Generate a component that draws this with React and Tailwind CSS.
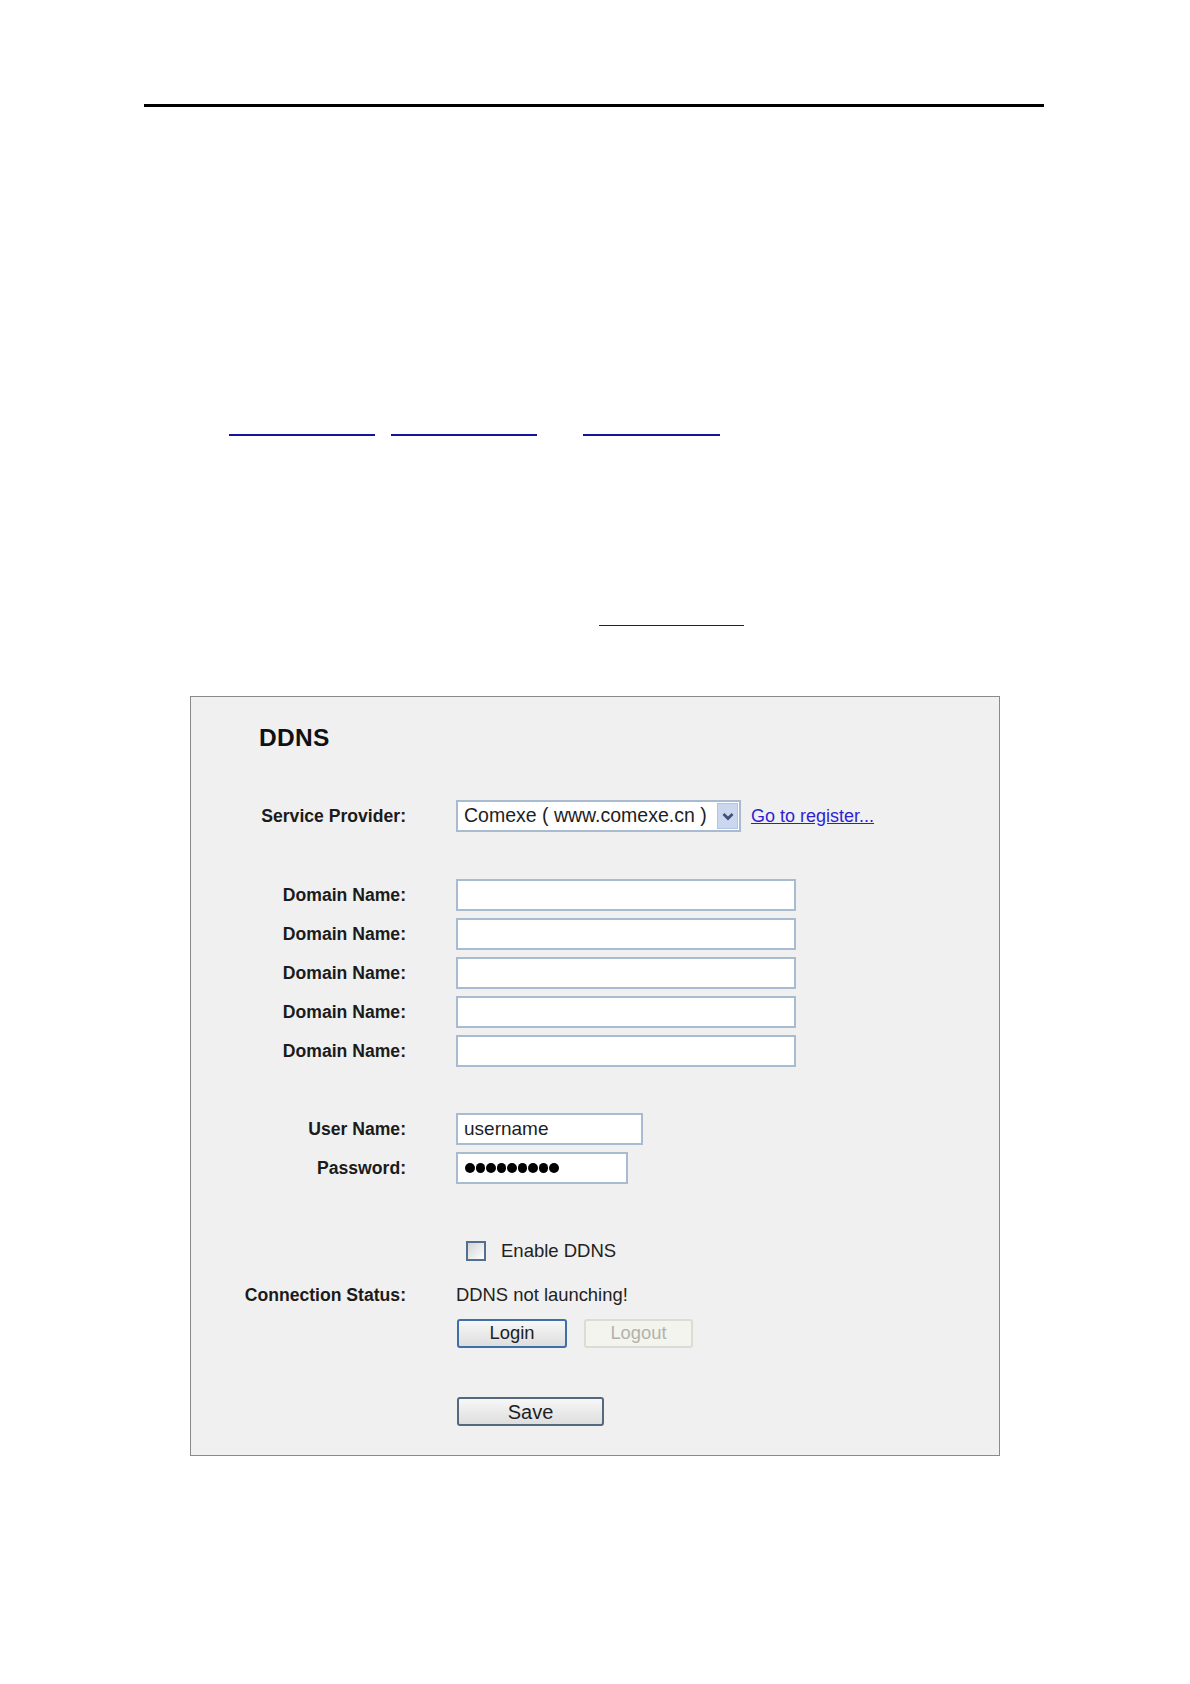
import React from 'react';

const font = { fontFamily: '"Liberation Sans", Arial, sans-serif' };

const Label = ({ children }) => (
  <div className="w-[215px] shrink-0 text-right text-[17.6px] font-bold text-[#1b1b1b]">{children}</div>
);

const Row = ({ label, className = '', children }) => (
  <div className={`flex items-center ${className}`}>
    <Label>{label}</Label>
    <div className="ml-[50px] flex items-center">{children}</div>
  </div>
);

const TextBox = ({ width, children }) => (
  <div
    className={`${width} h-[32px] border-2 border-[#a9bbd0] bg-white pl-[6px] flex items-center text-[19px] text-[#1e1e1e]`}
  >
    {children}
  </div>
);

const App = () => {
  const domains = [1, 2, 3, 4, 5];

  return (
    <div className="w-[1190px] min-h-[1684px] bg-white pt-[104px]" style={font}>
      {/* page rule */}
      <div className="ml-[144px] w-[900px] h-[3px] bg-black" />

      {/* blank link underlines */}
      <div className="mt-[327px] flex pl-[229px]">
        <div className="w-[146px] h-[2px] bg-[#14149b]" />
        <div className="ml-[16px] w-[146px] h-[2px] bg-[#14149b]" />
        <div className="ml-[46px] w-[137px] h-[2px] bg-[#14149b]" />
      </div>
      <div className="mt-[189px] ml-[599px] w-[145px] h-px bg-[#14149b]" />

      {/* DDNS settings panel */}
      <div className="mt-[70px] ml-[190px] w-[810px] border border-[#8a8a8a] bg-[#f0f0f0] pt-[26px] pb-[29px]">
        <div className="pl-[68px] h-[30px] leading-[30px] text-[24.5px] font-bold text-[#111] tracking-[0.3px]">DDNS</div>

        <Row label="Service Provider:" className="mt-[47px] h-[32px]">
          <div className="w-[285px] h-[32px] border-2 border-[#a9bbd0] bg-white flex items-center justify-between pl-[6px] pr-[1px]">
            <span className="text-[19.5px] text-[#1e1e1e] whitespace-nowrap">Comexe ( www.comexe.cn )</span>
            <div className="w-[21px] h-[26px] bg-[#cad7ef] border border-[#b3c5e6] flex items-center justify-center">
              <svg width="12" height="9" viewBox="0 0 12 9">
                <path d="M1.5 2 L6 6.5 L10.5 2" fill="none" stroke="#3f5275" strokeWidth="2.8" />
              </svg>
            </div>
          </div>
          <a href="#" className="ml-[10px] text-[18px] text-[#2f1fd3] underline whitespace-nowrap">
            Go to register...
          </a>
        </Row>

        <div className="mt-[47px] flex flex-col gap-[7px]">
          {domains.map((d) => (
            <Row key={d} label="Domain Name:" className="h-[32px]">
              <TextBox width="w-[340px]" />
            </Row>
          ))}
        </div>

        <Row label="User Name:" className="mt-[46px] h-[32px]">
          <TextBox width="w-[187px]">username</TextBox>
        </Row>
        <Row label="Password:" className="mt-[7px] h-[32px]">
          <TextBox width="w-[172px]">
            <div className="flex gap-[1px] pl-[1px]">
              {[0, 1, 2, 3, 4, 5, 6, 7, 8].map((i) => (
                <div key={i} className="w-[9.5px] h-[9.5px] rounded-full bg-black" />
              ))}
            </div>
          </TextBox>
        </Row>

        <Row label="" className="mt-[57px] h-[20px]">
          <div className="ml-[10px] w-[20px] h-[20px] border-2 border-[#52708f] bg-gradient-to-br from-[#d4d4d4] to-white" />
          <span className="ml-[15px] text-[18.5px] text-[#222]">Enable DDNS</span>
        </Row>

        <Row label="Connection Status:" className="mt-[22px] h-[24px]">
          <span className="text-[18.4px] text-[#222] whitespace-nowrap">DDNS not launching!</span>
        </Row>

        <Row label="" className="mt-[12px] h-[29px]">
          <button className="ml-px w-[110px] h-[29px] rounded-[3px] border-2 border-[#3e6fa6] bg-gradient-to-b from-[#f7f7f7] to-[#dedede] text-[18.4px] text-[#1e1e1e] leading-none">
            Login
          </button>
          <button className="ml-[17px] w-[109px] h-[29px] rounded-[3px] border-2 border-[#dcdcd4] bg-[#f4f4ef] text-[18.4px] text-[#b2b2aa] leading-none">
            Logout
          </button>
        </Row>

        <Row label="" className="mt-[49px] h-[29px]">
          <button className="ml-px w-[147px] h-[29px] rounded-[3px] border-2 border-[#56687e] bg-gradient-to-b from-[#f7f7f7] to-[#dedede] text-[20px] text-[#1e1e1e] leading-none">
            Save
          </button>
        </Row>
      </div>
    </div>
  );
};

export default App;
